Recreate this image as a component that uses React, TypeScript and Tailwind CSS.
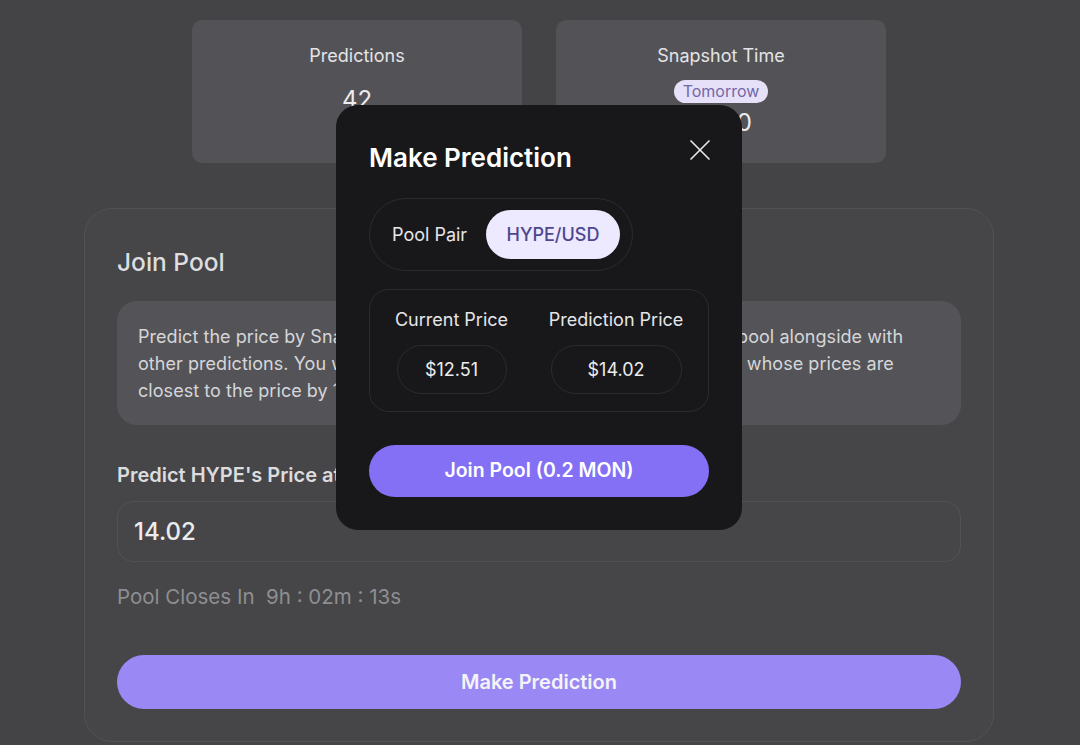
import { X } from "lucide-react";

function StatCard({ label, children }: { label: string; children: React.ReactNode }) {
  return (
    <div className="flex h-[143px] flex-col items-center rounded-[10px] bg-[#535357] pt-[23px]">
      <p className="text-[18px] leading-[26px] text-[#e4e4e6]">{label}</p>
      <div className="mt-3 flex flex-col items-center">{children}</div>
    </div>
  );
}

export default function App() {
  return (
    <div
      className="relative min-h-screen bg-[#444446] pr-[2px] text-[#e8e8ea]"
      style={{ fontFamily: "Inter, 'Noto Sans', sans-serif" }}
    >
      <div className="mx-auto flex w-[910px] flex-col items-center pt-5 pb-1">
        {/* Stats */}
        <div className="grid w-[694px] grid-cols-2 gap-[34px]">
          <StatCard label="Predictions">
            <p className="mt-[3px] text-[24px] leading-[32px] text-[#ececee]">42</p>
          </StatCard>
          <StatCard label="Snapshot Time">
            <span className="-mt-px rounded-full bg-[#e6e1f8] px-[9px] text-[16px] leading-[23px] text-[#7367a8]">
              Tomorrow
            </span>
            <p className="mt-[4px] text-[24px] leading-[32px] text-[#ececee]">12:00</p>
          </StatCard>
        </div>

        {/* Join Pool card */}
        <div className="mt-[45px] w-full rounded-[28px] border border-[#525256] bg-[#464648] px-[32px] pt-[37px] pb-[32px]">
          <h2 className="text-[24.5px] leading-[32px] font-medium text-[#dedee0]">Join Pool</h2>
          <div className="mt-[23px] rounded-[20px] bg-[#545458] px-[21px] pt-[22px] pb-[21px] text-[18px] leading-[27px] tracking-[0.05px] text-[#d6d6d8]">
            Predict the price by Snapshot Time and join the HYPE/USD prediction pool alongside with
            <br />
            other predictions. You will share the rewards with the other predictions whose prices are
            <br />
            closest to the price by 12:00 UTC tomorrow.
          </div>

          <p className="mt-[36px] text-[20px] leading-[28px] font-semibold text-[#dcdcde]">
            Predict HYPE's Price at Snapshot Time
          </p>
          <div className="mt-[12px] flex h-[61px] items-center rounded-[16px] border border-[#525256] px-[16px]">
            <span className="text-[24px] font-medium text-[#ececee]">14.02</span>
          </div>

          <p className="mt-[21px] text-[20.5px] leading-[28px] text-[#8e8e92]">
            Pool Closes In&nbsp; 9h : 02m : 13s
          </p>

          <button className="mt-[44px] h-[54px] w-full rounded-full bg-[#9a89f5] text-[20px] font-semibold text-[#f4f4f6]">
            Make Prediction
          </button>
        </div>
      </div>

      {/* Modal */}
      <div className="absolute top-[105px] left-[336px] w-[406px] rounded-[22px] bg-[#18181b] px-[33px] pt-[37px] pb-[33px]">
        <div className="flex items-start justify-between">
          <h3 className="text-[26px] leading-[32px] font-semibold text-white">Make Prediction</h3>
          <button className="-mt-[10px] -mr-[9px] text-[#e8e8ea]">
            <X size={36} strokeWidth={1.1} />
          </button>
        </div>

        <div className="mt-[24px] flex h-[73px] w-[264px] items-center justify-between rounded-full border border-[#2c2c30] pr-[12px] pl-[22px]">
          <span className="text-[18px] text-[#e6e6e8]">Pool Pair</span>
          <span className="flex h-[49px] w-[134px] items-center justify-center rounded-full bg-[#ede9fe] text-[18px] font-medium text-[#4e4790]">
            HYPE/USD
          </span>
        </div>

        <div className="mt-[18px] flex justify-center gap-[44px] rounded-[20px] border border-[#2c2c30] pt-[17px] pb-[17px]">
          <div className="flex w-[110px] flex-col items-center">
            <span className="text-[18px] leading-[26px] whitespace-nowrap text-[#e6e6e8]">Current Price</span>
            <span className="mt-[12px] flex h-[49px] w-full items-center justify-center rounded-full border border-[#2c2c30] text-[18px] text-[#ececee]">
              $12.51
            </span>
          </div>
          <div className="flex w-[131px] flex-col items-center">
            <span className="text-[18px] leading-[26px] whitespace-nowrap text-[#e6e6e8]">Prediction Price</span>
            <span className="mt-[12px] flex h-[49px] w-full items-center justify-center rounded-full border border-[#2c2c30] text-[18px] text-[#ececee]">
              $14.02
            </span>
          </div>
        </div>

        <button className="mt-[33px] h-[52px] w-full rounded-full bg-[#8470f4] text-[19.5px] font-semibold text-white">
          Join Pool (0.2 MON)
        </button>
      </div>
    </div>
  );
}
